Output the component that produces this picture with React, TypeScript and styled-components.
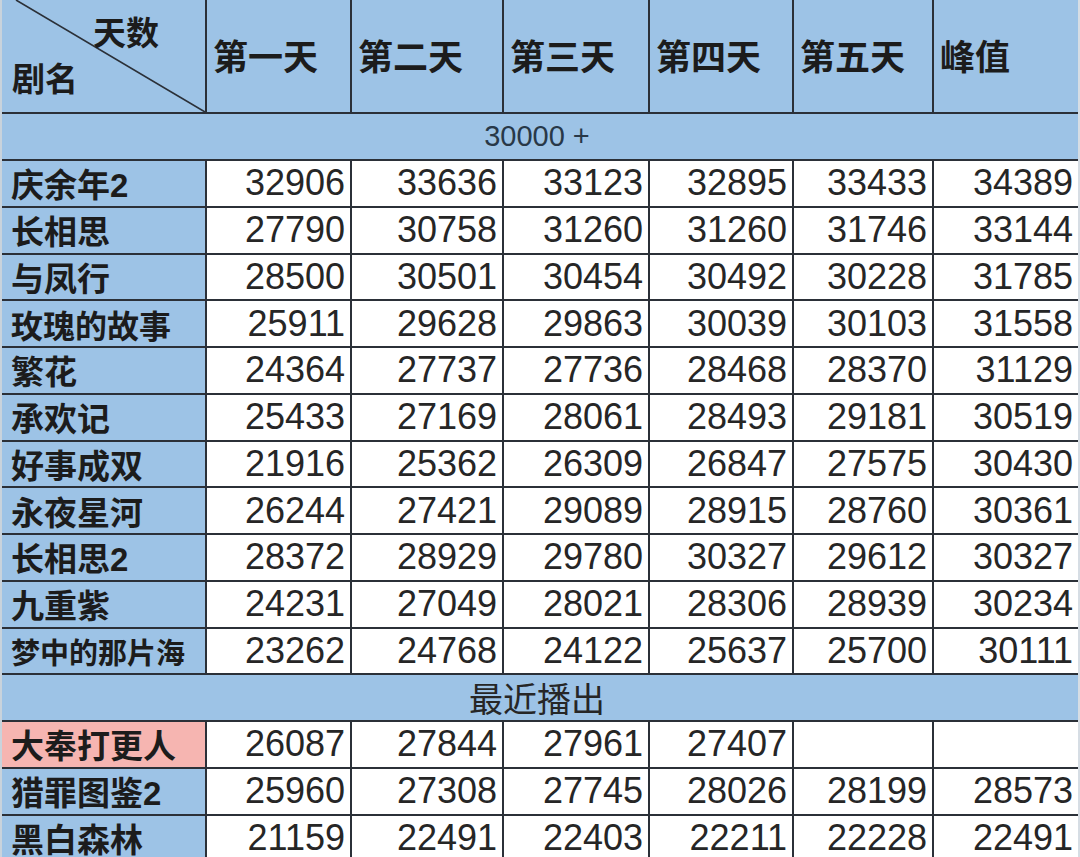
import React from "react";
import styled, { createGlobalStyle } from "styled-components";

const GlobalStyle = createGlobalStyle`
  html, body {
    margin: 0;
    padding: 0;
    background: #ffffff;
    height: 857px;
    overflow: hidden;
  }
`;

const BLUE = "#9dc3e6";
const PINK = "#f6b5b1";
const LINE = "#2b3038";
const CJK = `"Noto Sans CJK SC", "Noto Sans", sans-serif`;
const MIXED = `"Liberation Sans", "Noto Sans CJK SC", sans-serif`;
const NUM = `"Liberation Sans", Arial, sans-serif`;

type Row = { name: string; fs?: number; tone?: "blue" | "pink"; values: (number | null)[] };

const topRows: Row[] = [
  { name: "庆余年2", values: [32906, 33636, 33123, 32895, 33433, 34389] },
  { name: "长相思", values: [27790, 30758, 31260, 31260, 31746, 33144] },
  { name: "与凤行", values: [28500, 30501, 30454, 30492, 30228, 31785] },
  { name: "玫瑰的故事", fs: 32, values: [25911, 29628, 29863, 30039, 30103, 31558] },
  { name: "繁花", values: [24364, 27737, 27736, 28468, 28370, 31129] },
  { name: "承欢记", values: [25433, 27169, 28061, 28493, 29181, 30519] },
  { name: "好事成双", values: [21916, 25362, 26309, 26847, 27575, 30430] },
  { name: "永夜星河", values: [26244, 27421, 29089, 28915, 28760, 30361] },
  { name: "长相思2", values: [28372, 28929, 29780, 30327, 29612, 30327] },
  { name: "九重紫", values: [24231, 27049, 28021, 28306, 28939, 30234] },
  { name: "梦中的那片海", fs: 29, values: [23262, 24768, 24122, 25637, 25700, 30111] },
];

const recentRows: Row[] = [
  { name: "大奉打更人", tone: "pink", values: [26087, 27844, 27961, 27407, null, null] },
  { name: "猎罪图鉴2", values: [25960, 27308, 27745, 28026, 28199, 28573] },
  { name: "黑白森林", values: [21159, 22491, 22403, 22211, 22228, 22491] },
];

const days = ["第一天", "第二天", "第三天", "第四天", "第五天", "峰值"];

const Sheet = styled.div`
  display: grid;
  grid-template-columns: 203px 143px 150px 144px 142px 138px 144px;
  grid-template-rows: 112px 45px;
  grid-auto-rows: 44.75px;
  gap: 2px;
  background: ${LINE};
  border-left: 2px solid #c9d3dc;
  border-right: 2px solid #d6dde4;
  width: 1076px;
`;

const Corner = styled.div`
  position: relative;
  background: ${BLUE};
  display: flex;
  flex-direction: column;
  padding: 15px 0 0 10px;
  font-family: ${CJK};
  font-weight: 700;
  font-size: 33px;
  line-height: 1;
  color: #1c1c1c;
  overflow: hidden;
`;

const Diagonal = styled.svg`
  position: absolute;
  inset: 0;
  width: 100%;
  height: 100%;
`;

const CornerTop = styled.span`
  position: relative;
  margin-left: 81px;
`;

const CornerBottom = styled.span`
  position: relative;
  margin-top: 13px;
`;

const HeadCell = styled.div`
  background: ${BLUE};
  display: flex;
  align-items: center;
  padding: 0 0 4px 6px;
  font-family: ${CJK};
  font-weight: 700;
  font-size: 35px;
  color: #1c1c1c;
`;

const Band = styled.div<{ $size: number; $color?: string }>`
  grid-column: 1 / -1;
  background: ${BLUE};
  display: flex;
  align-items: center;
  justify-content: center;
  padding-right: 6px;
  font-family: ${MIXED};
  font-size: ${(p) => p.$size}px;
  color: ${(p) => p.$color ?? "#262626"};
`;

const NameCell = styled.div<{ $fs?: number; $tone?: "blue" | "pink" }>`
  background: ${(p) => (p.$tone === "pink" ? PINK : BLUE)};
  display: flex;
  align-items: center;
  padding-left: 9px;
  font-family: ${MIXED};
  font-weight: 700;
  font-size: ${(p) => p.$fs ?? 33}px;
  color: #1c1c1c;
  white-space: nowrap;
`;

const NumCell = styled.div`
  background: #ffffff;
  display: flex;
  align-items: center;
  justify-content: flex-end;
  padding-right: 5px;
  font-family: ${NUM};
  font-size: 36px;
  color: #262626;
`;

const DataRow: React.FC<{ row: Row }> = ({ row }) => (
  <>
    <NameCell $fs={row.fs} $tone={row.tone}>
      {row.name}
    </NameCell>
    {row.values.map((v, i) => (
      <NumCell key={i}>{v ?? ""}</NumCell>
    ))}
  </>
);

export default function App() {
  return (
    <>
      <GlobalStyle />
      <Sheet>
        <Corner>
          <Diagonal viewBox="0 0 203 112" preserveAspectRatio="none">
            <line x1="14" y1="0" x2="203" y2="112" stroke="#2b3038" strokeWidth="1.6" />
          </Diagonal>
          <CornerTop>天数</CornerTop>
          <CornerBottom>剧名</CornerBottom>
        </Corner>
        {days.map((d) => (
          <HeadCell key={d}>{d}</HeadCell>
        ))}

        <Band $size={29} $color="#283848">30000 +</Band>
        {topRows.map((r) => (
          <DataRow key={r.name} row={r} />
        ))}

        <Band $size={34}>最近播出</Band>
        {recentRows.map((r) => (
          <DataRow key={r.name} row={r} />
        ))}
      </Sheet>
    </>
  );
}
